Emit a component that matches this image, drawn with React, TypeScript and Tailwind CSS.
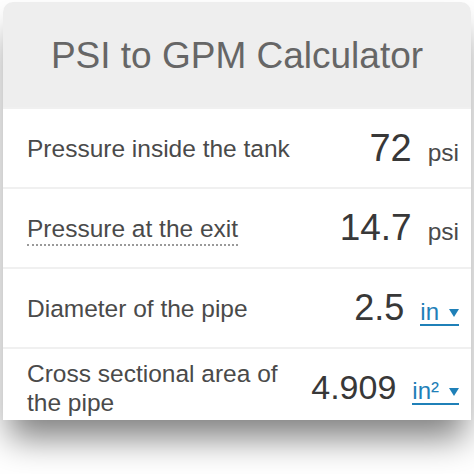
export default function App() {
  const rows = [
    { label: "Pressure inside the tank", value: "72", size: "text-[38px]", unit: "psi", dotted: false, select: false },
    { label: "Pressure at the exit", value: "14.7", size: "text-[37px]", unit: "psi", dotted: true, select: false },
    { label: "Diameter of the pipe", value: "2.5", size: "text-[36px]", unit: "in", dotted: false, select: true },
    { label: "Cross sectional area of the pipe", value: "4.909", size: "text-[34px]", unit: "in²", dotted: false, select: true },
  ];

  return (
    <div
      className="w-[474px] h-[474px] bg-white overflow-hidden pt-[2px] px-[3px]"
      style={{ fontFamily: '"Liberation Sans", Arial, sans-serif' }}
    >
      <div className="rounded-t-[10px] bg-white shadow-[0_24px_34px_-6px_rgba(0,0,0,0.5)]">
        {/* Header */}
        <div className="h-[105px] bg-[#eeeeee] rounded-t-[10px] flex items-center justify-center">
          <h1 className="text-[37px] text-[#666666] pt-[2px]">PSI to GPM Calculator</h1>
        </div>

        {rows.map((r, i) => (
          <div
            key={i}
            className={`flex items-center justify-between pl-[24px] pr-[12px] border-t-2 border-[#f0f0f0] ${
              i === 3 ? "h-[73px] pt-[6px]" : "h-[80px]"
            }`}
          >
            <span
              className={`text-[24.5px] text-[#4a4a4a] leading-[29px] max-w-[290px] ${
                r.dotted ? "border-b-2 border-dotted border-[#9a9a9a] pb-[1px] mt-[3px]" : ""
              }`}
            >
              {r.label}
            </span>
            <div className="flex items-baseline gap-[16px]">
              <span className={`${r.size} text-[#383838]`}>{r.value}</span>
              {r.select ? (
                <span className="text-[24px] text-[#1f80b8] border-b-2 border-[#1f80b8] leading-[24px] flex items-center">
                  {r.unit}
                  <svg width="10" height="8" viewBox="0 0 10 8" className="ml-[10px] mt-[2px]">
                    <path d="M0 0 L10 0 L5 8 Z" fill="#1f80b8" />
                  </svg>
                </span>
              ) : (
                <span className="text-[24.5px] text-[#4a4a4a]">{r.unit}</span>
              )}
            </div>
          </div>
        ))}
      </div>
    </div>
  );
}
